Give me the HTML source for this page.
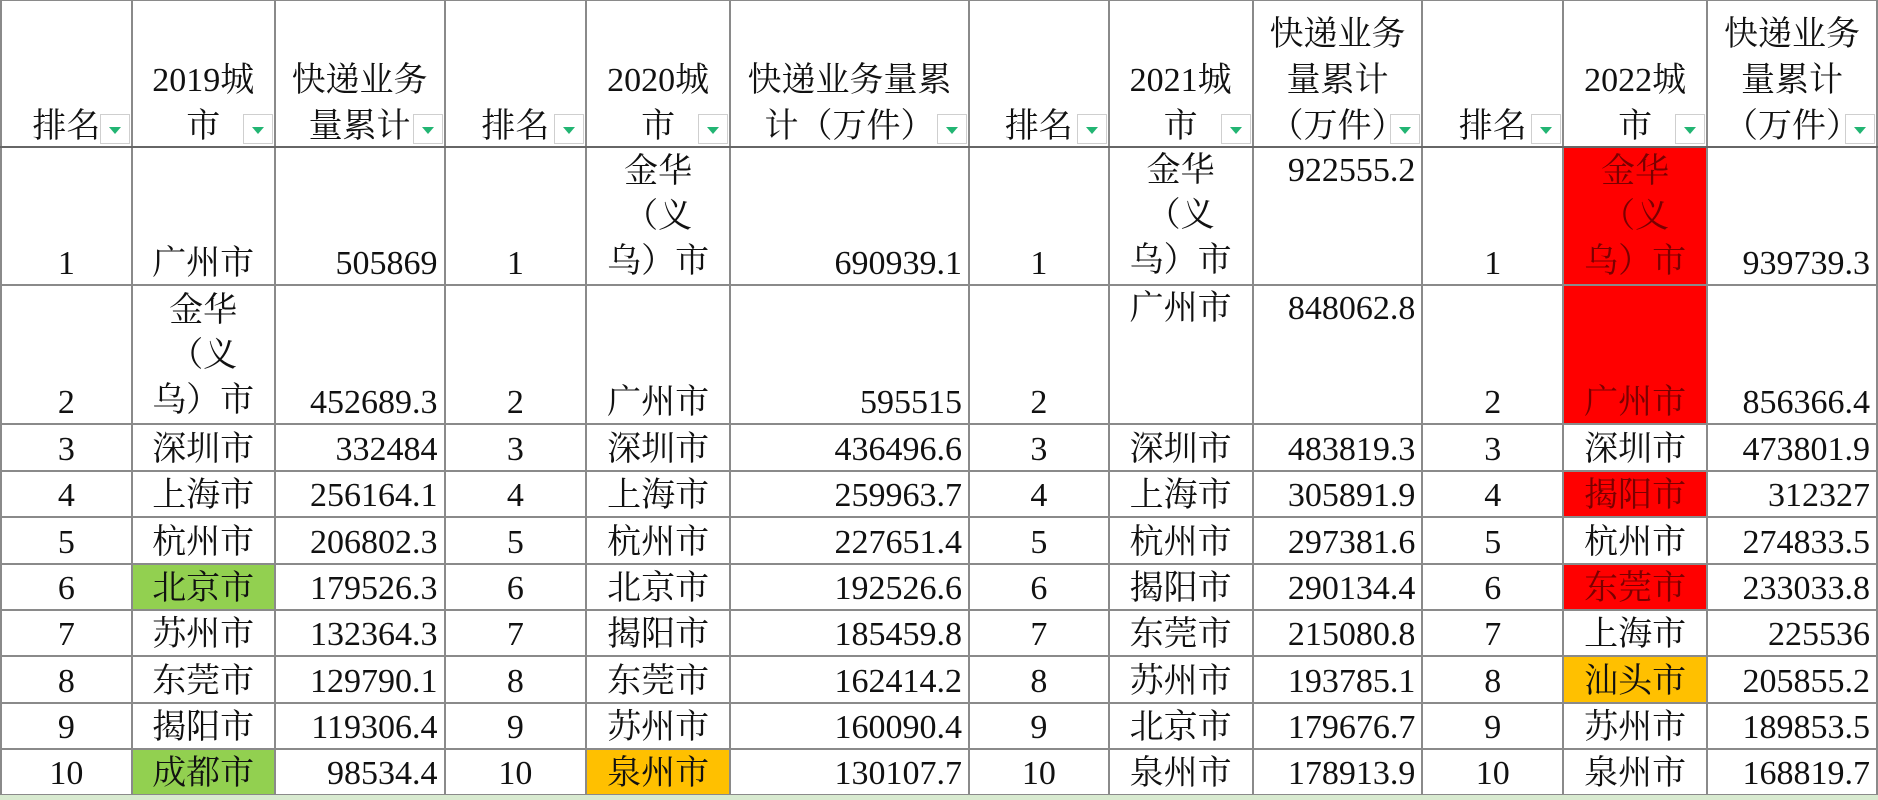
<!DOCTYPE html>
<html><head><meta charset="utf-8"><style>
html,body{margin:0;padding:0;background:#fff;width:1878px;height:800px;overflow:hidden}
table{border-collapse:collapse;table-layout:fixed;position:absolute;left:0;top:-1px;font-family:"Liberation Serif","Noto Serif CJK SC",serif;font-size:34px;color:#111}
td{border:2px solid #8a8a8a;padding:0 3px;vertical-align:bottom;line-height:40px;white-space:nowrap;overflow:hidden;text-align:center}
td.n{text-align:right;padding-right:6px}
td.t{vertical-align:top}
.m{line-height:45px}
tr.h td{position:relative;height:145px;line-height:46px;border-bottom:2px solid #666;padding:0 1px 0}
.hl{position:relative;top:4px}
.f{position:absolute;right:1px;bottom:2px;width:30px;height:30px;border:1px solid #cfcfcf;background:#fff;box-sizing:border-box}
.f:after{content:"";position:absolute;left:8px;top:12px;border-left:6px solid transparent;border-right:6px solid transparent;border-top:7px solid #22b573}
.r{background:#ff0000;color:#7a0000}.g{background:#92d050}.o{background:#ffc000}
.strip{position:absolute;left:0;top:795px;width:1878px;height:5px;background:#d8ead0}
</style></head><body>
<table>
<colgroup><col style="width:131px"><col style="width:143px"><col style="width:170px"><col style="width:142px"><col style="width:144px"><col style="width:239px"><col style="width:140px"><col style="width:144px"><col style="width:170px"><col style="width:141px"><col style="width:144px"><col style="width:170px"></colgroup>
<tr class="h">
<td><div class="hl">排名</div><span class="f"></span></td><td><div class="hl">2019城<br>市</div><span class="f"></span></td><td><div class="hl">快递业务<br>量累计</div><span class="f"></span></td>
<td><div class="hl">排名</div><span class="f"></span></td><td><div class="hl">2020城<br>市</div><span class="f"></span></td><td><div class="hl">快递业务量累<br>计（万件）</div><span class="f"></span></td>
<td><div class="hl">排名</div><span class="f"></span></td><td><div class="hl">2021城<br>市</div><span class="f"></span></td><td><div class="hl">快递业务<br>量累计<br>（万件）</div><span class="f"></span></td>
<td><div class="hl">排名</div><span class="f"></span></td><td><div class="hl">2022城<br>市</div><span class="f"></span></td><td><div class="hl">快递业务<br>量累计<br>（万件）</div><span class="f"></span></td>
</tr>
<tr style="height:138px"><td>1</td><td>广州市</td><td class="n">505869</td><td>1</td><td><div class="m">金华<br>（义<br>乌）市</div></td><td class="n">690939.1</td><td>1</td><td class="t"><div class="m">金华<br>（义<br>乌）市</div></td><td class="n t"><div class="m">922555.2</div></td><td>1</td><td class="r"><div class="m">金华<br>（义<br>乌）市</div></td><td class="n">939739.3</td></tr>
<tr style="height:139px"><td>2</td><td><div class="m">金华<br>（义<br>乌）市</div></td><td class="n">452689.3</td><td>2</td><td>广州市</td><td class="n">595515</td><td>2</td><td class="t"><div class="m">广州市</div></td><td class="n t"><div class="m">848062.8</div></td><td>2</td><td class="r">广州市</td><td class="n">856366.4</td></tr>
<tr style="height:47px"><td>3</td><td>深圳市</td><td class="n">332484</td><td>3</td><td>深圳市</td><td class="n">436496.6</td><td>3</td><td>深圳市</td><td class="n">483819.3</td><td>3</td><td>深圳市</td><td class="n">473801.9</td></tr>
<tr style="height:46px"><td>4</td><td>上海市</td><td class="n">256164.1</td><td>4</td><td>上海市</td><td class="n">259963.7</td><td>4</td><td>上海市</td><td class="n">305891.9</td><td>4</td><td class="r">揭阳市</td><td class="n">312327</td></tr>
<tr style="height:47px"><td>5</td><td>杭州市</td><td class="n">206802.3</td><td>5</td><td>杭州市</td><td class="n">227651.4</td><td>5</td><td>杭州市</td><td class="n">297381.6</td><td>5</td><td>杭州市</td><td class="n">274833.5</td></tr>
<tr style="height:46px"><td>6</td><td class="g">北京市</td><td class="n">179526.3</td><td>6</td><td>北京市</td><td class="n">192526.6</td><td>6</td><td>揭阳市</td><td class="n">290134.4</td><td>6</td><td class="r">东莞市</td><td class="n">233033.8</td></tr>
<tr style="height:46px"><td>7</td><td>苏州市</td><td class="n">132364.3</td><td>7</td><td>揭阳市</td><td class="n">185459.8</td><td>7</td><td>东莞市</td><td class="n">215080.8</td><td>7</td><td>上海市</td><td class="n">225536</td></tr>
<tr style="height:47px"><td>8</td><td>东莞市</td><td class="n">129790.1</td><td>8</td><td>东莞市</td><td class="n">162414.2</td><td>8</td><td>苏州市</td><td class="n">193785.1</td><td>8</td><td class="o">汕头市</td><td class="n">205855.2</td></tr>
<tr style="height:46px"><td>9</td><td>揭阳市</td><td class="n">119306.4</td><td>9</td><td>苏州市</td><td class="n">160090.4</td><td>9</td><td>北京市</td><td class="n">179676.7</td><td>9</td><td>苏州市</td><td class="n">189853.5</td></tr>
<tr style="height:46px"><td>10</td><td class="g">成都市</td><td class="n">98534.4</td><td>10</td><td class="o">泉州市</td><td class="n">130107.7</td><td>10</td><td>泉州市</td><td class="n">178913.9</td><td>10</td><td>泉州市</td><td class="n">168819.7</td></tr>
</table>
<div class="strip"></div>
</body></html>
